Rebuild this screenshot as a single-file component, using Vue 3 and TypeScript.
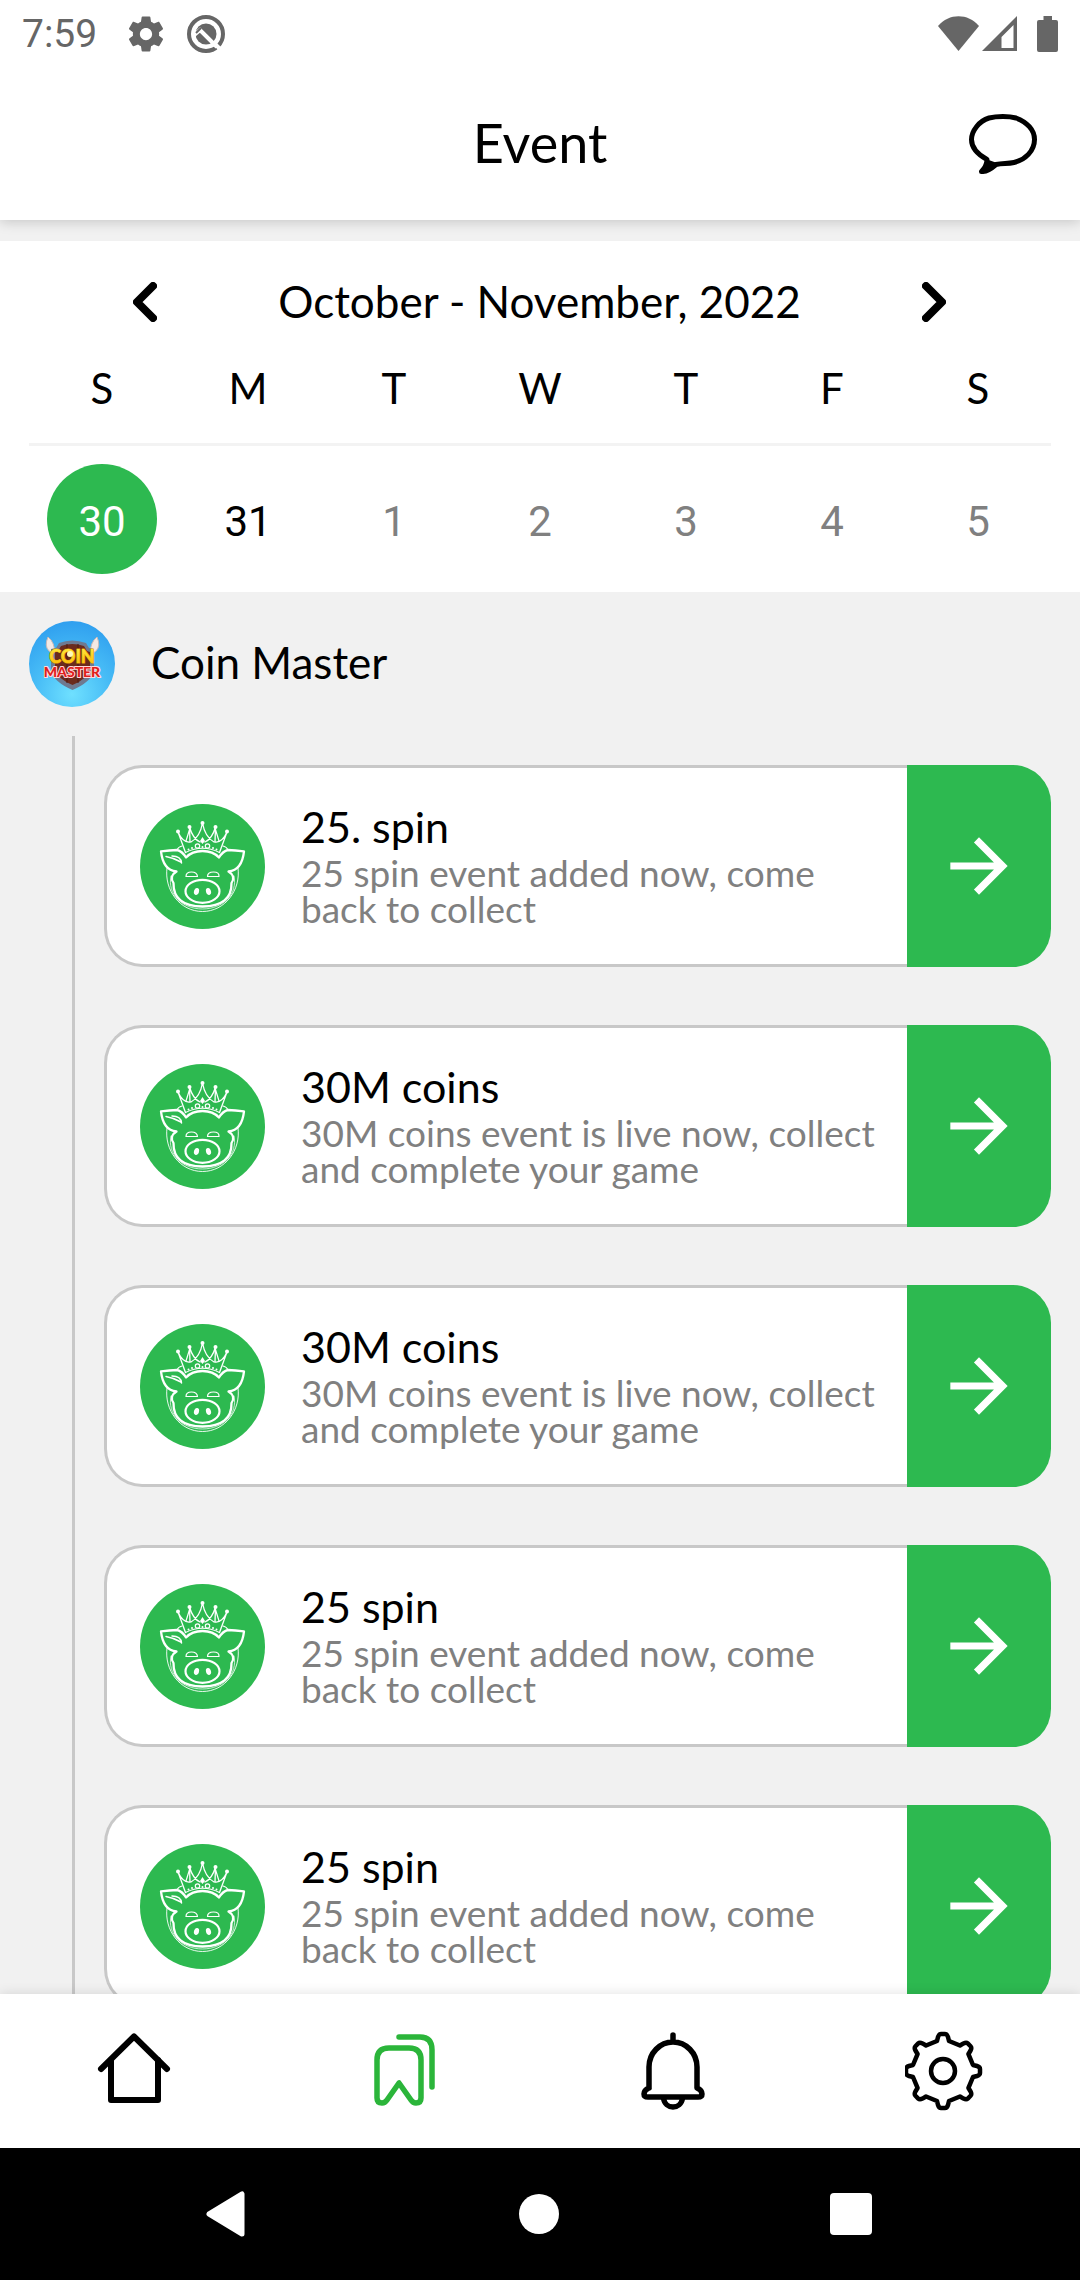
<script setup lang="ts">
interface EventItem {
  id: number
  title: string
  text: string
}

interface Day {
  date: number
  state: 'selected' | 'current' | 'next'
}

const weekdays: string[] = ['S', 'M', 'T', 'W', 'T', 'F', 'S']

const days: Day[] = [
  { date: 30, state: 'selected' },
  { date: 31, state: 'current' },
  { date: 1, state: 'next' },
  { date: 2, state: 'next' },
  { date: 3, state: 'next' },
  { date: 4, state: 'next' },
  { date: 5, state: 'next' },
]

const spin = '25 spin event added now, come back to collect'
const coins = '30M coins event is live now, collect and complete your game'

const events: EventItem[] = [
  { id: 1, title: '25. spin', text: spin },
  { id: 2, title: '30M coins', text: coins },
  { id: 3, title: '30M coins', text: coins },
  { id: 4, title: '25 spin', text: spin },
  { id: 5, title: '25 spin', text: spin },
]

// Outline of an eight-toothed cog centred on 0,0
function cogPath(): string {
  let d = ''
  for (let i = 0; i < 8; i++) {
    const a = (i * Math.PI) / 4
    const p = (x: number, y: number): string =>
      `${(x * Math.cos(a) - y * Math.sin(a)).toFixed(2)} ${(x * Math.sin(a) + y * Math.cos(a)).toFixed(2)}`
    d += `${i === 0 ? 'M' : 'L'}${p(-6, -30)}L${p(-5, -34)}Q${p(-4, -37)} ${p(-2, -37)}`
    d += `L${p(2, -37)}Q${p(4, -37)} ${p(5, -34)}L${p(6, -30)}`
  }
  return d + 'Z'
}
const cog = cogPath()
</script>

<template>
  <div class="app">
    <div class="status">
      <div class="status-side">
        <span class="clock">7:59</span>
        <svg class="status-cog" viewBox="0 0 24 24" aria-hidden="true">
          <path d="M19.43 12.98c.04-.32.07-.64.07-.98s-.03-.66-.07-.98l2.11-1.65c.19-.15.24-.42.12-.64l-2-3.46c-.12-.22-.39-.3-.61-.22l-2.49 1c-.52-.4-1.08-.73-1.69-.98l-.38-2.65C14.46 2.18 14.25 2 14 2h-4c-.25 0-.46.18-.49.42l-.38 2.65c-.61.25-1.17.59-1.69.98l-2.49-1c-.23-.09-.49 0-.61.22l-2 3.46c-.13.22-.07.49.12.64l2.11 1.65c-.04.32-.07.65-.07.98s.03.66.07.98l-2.11 1.65c-.19.15-.24.42-.12.64l2 3.46c.12.22.39.3.61.22l2.49-1c.52.4 1.08.73 1.69.98l.38 2.65c.03.24.24.42.49.42h4c.25 0 .46-.18.49-.42l.38-2.65c.61-.25 1.17-.59 1.69-.98l2.49 1c.23.09.49 0 .61-.22l2-3.46c.12-.22.07-.49-.12-.64l-2.11-1.65zM12 15.5c-1.93 0-3.5-1.57-3.5-3.5s1.57-3.5 3.5-3.5 3.5 1.57 3.5 3.5-1.57 3.5-3.5 3.5z" />
        </svg>
        <svg class="status-q" viewBox="0 0 38 38" aria-hidden="true">
          <circle cx="19" cy="19" r="17" fill="none" stroke="#666" stroke-width="4" />
          <circle cx="19" cy="19" r="10.5" />
          <path d="M6 21 13 15 30 32" fill="none" stroke="#fff" stroke-width="4" />
          <path d="M9 18 14 13" fill="none" stroke="#666" stroke-width="2" />
          <path d="M26 27 36 37" fill="none" stroke="#fff" stroke-width="4" />
        </svg>
      </div>
      <div class="status-side">
        <svg width="41" height="36" viewBox="0 0 41 36" aria-hidden="true">
          <path d="M0 10C11-3 30-3 41 10L20.500 35Z" />
        </svg>
        <svg class="signal" width="35" height="36" viewBox="0 0 35 36" aria-hidden="true">
          <path d="M35 0V35H0ZM31.500 9 19.500 21V32H31.500Z" fill-rule="evenodd" />
        </svg>
        <svg class="battery" width="21" height="36" viewBox="0 0 21 36" aria-hidden="true">
          <path d="M6.500 0H15V4H19Q21 4 21 6V34Q21 36 19 36H2Q0 36 0 34V6Q0 4 2 4H6.500Z" />
        </svg>
      </div>
    </div>

    <header class="header">
      <h1>Event</h1>
      <button class="chat" type="button" aria-label="Messages">
        <svg width="68" height="60" viewBox="0 0 68 60" aria-hidden="true">
          <path d="M18 45.500C8 40 2.500 34 2.500 25.500C2.500 17 10 7 20 4C28 2 40 2 47 4C58 8 65.500 16 65.500 25.500C65.500 37 56 46 45 48.500C38 50 34 49 27 50.500C23 54 18 58 12.500 57.500C16 54 18 51 18 45.500Z" fill="none" stroke="#000" stroke-width="5" stroke-linejoin="round" />
          <path d="M17 45 28 49 18 57 12 58Z" />
        </svg>
      </button>
    </header>

    <section class="calendar">
      <div class="month">
        <button type="button" aria-label="Previous week">
          <svg width="24" height="40" viewBox="0 0 24 40" aria-hidden="true"><path d="M20 4 4 20 20 36" /></svg>
        </button>
        <h2>October - November, 2022</h2>
        <button type="button" aria-label="Next week">
          <svg width="24" height="40" viewBox="0 0 24 40" aria-hidden="true"><path d="M4 4 20 20 4 36" /></svg>
        </button>
      </div>
      <div class="week weekdays">
        <span v-for="(name, i) in weekdays" :key="i">{{ name }}</span>
      </div>
      <div class="week dates">
        <button v-for="day in days" :key="day.date" type="button" :class="day.state">{{ day.date }}</button>
      </div>
    </section>

    <main class="feed">
      <div class="game">
        <svg class="game-logo" viewBox="0 0 86 86" role="img" aria-label="Coin Master logo">
          <defs>
            <radialGradient id="sky" cx="0.5" cy="0.85" r="0.85">
              <stop offset="0" stop-color="#6fe0ff" />
              <stop offset="0.5" stop-color="#48bdf6" />
              <stop offset="1" stop-color="#2f9fef" />
            </radialGradient>
            <linearGradient id="gold" x1="0" y1="0" x2="0" y2="1">
              <stop offset="0" stop-color="#fff04a" />
              <stop offset="1" stop-color="#fbb800" />
            </linearGradient>
          </defs>
          <circle cx="43" cy="43" r="43" fill="url(#sky)" />
          <path d="M19 16Q15 25 20 30L26 34Q26 21 19 16ZM68 16Q72 25 67 30L61 34Q61 21 68 16Z" fill="#f3e9e4" stroke="#c9b9b8" stroke-width="1" />
          <path d="M30 22Q43 17 57 22L60 27 65 28V50Q62 61 43.500 69Q25 61 22 50V28L27 27Z" fill="#6e7a91" />
          <path d="M32 25Q43 21 55 25L58 30 61 31V49Q58 58 43.500 64Q29 58 26 49V31L29 30Z" fill="#6b2b1d" />
          <path d="M38 23V62M49 23V62" stroke="#4b1b12" stroke-width="1" />
          <g text-anchor="middle" paint-order="stroke" stroke-linejoin="round">
            <text x="43" y="42" class="logo-text" font-size="18" fill="url(#gold)" stroke="#e8a000" stroke-width="1">COIN</text>
            <text x="43" y="56" class="logo-text" font-size="14" fill="#e0201b" stroke="#ffd9dc" stroke-width="2">MASTER</text>
          </g>
          <circle cx="41" cy="33" r="3" fill="#fff7b8" />
        </svg>
        <h3>Coin Master</h3>
      </div>

      <ul class="timeline">
        <li v-for="item in events" :key="item.id" class="card">
          <div class="card-body">
            <svg class="pig" viewBox="0 0 125 125" aria-hidden="true">
              <circle cx="62.500" cy="62.500" r="62.500" fill="#2db950" />
              <g fill="none" stroke="#fff" stroke-linecap="round" stroke-linejoin="round">
                <path d="M45.500 48.500 38 28Q43 39 50 38L49.500 23Q53 35 60 38M79.500 48.500 87 28Q82 39 75 38L75.500 23Q72 35 65 38M51 38Q60 33 62.500 19Q65 33 74 38" stroke-width="1.300" />
                <path d="M50 24 46 37M75 24 79 37M45.500 48.500Q62.500 40 79.500 48.500M37 46Q38 43 42 42M88 46Q87 43 83 42" stroke-width="1.200" />
                <circle cx="57.500" cy="42" r="2.200" stroke-width="1.200" />
                <circle cx="67.500" cy="42" r="2.200" stroke-width="1.200" />
                <path d="M46 53.500Q42 47 37 46Q30 46.500 21 47.300Q23 66 36.500 67.500Q29 72 33.500 79Q33 102 62.500 102.500Q92 102 91.500 79Q96 72 88.500 67.500Q102 66 104 47.300Q95 46.500 88 46Q83 47 79 53.500Q73 47 62.500 47Q52 47 46 53.500Z" stroke-width="2.300" />
                <path d="M27 64C24 86 40 107.500 62.500 107.500S101 86 98 64" stroke-width="0.900" />
                <path d="M31 72C27 90 42 105 62.500 105S98 90 94 72" stroke-width="0.700" />
                <path d="M46 72.500Q46 68 51.500 68T57.500 72.500ZM67.500 72.500Q67.500 68 73.500 68T79 72.500Z" stroke-width="1.200" />
                <ellipse cx="62.500" cy="87.300" rx="17" ry="11.500" stroke-width="2.200" />
                <path d="M26 52.500Q34 54 41 58" stroke-width="1.500" />
                <path d="M32 52Q41 52 41.500 59" stroke-width="1.500" />
              </g>
              <g fill="#fff">
                <circle cx="38" cy="27.500" r="2" />
                <circle cx="49.500" cy="23" r="2" />
                <circle cx="62.500" cy="19" r="2" />
                <circle cx="75.500" cy="23" r="2" />
                <circle cx="87" cy="27.500" r="2" />
                <path d="M62.500 33 65 37 62.500 40 60 37Z" />
                <circle cx="62.500" cy="43" r="1" />
                <circle cx="52" cy="44" r="1" />
                <circle cx="73" cy="44" r="1" />
                <circle cx="48.500" cy="45.500" r="1" />
                <circle cx="76.500" cy="45.500" r="1" />
                <ellipse cx="56.500" cy="87.500" rx="2.500" ry="3.500" transform="rotate(15 56.500 87.500)" />
                <ellipse cx="68.500" cy="87.500" rx="2.500" ry="3.500" transform="rotate(-15 68.500 87.500)" />
              </g>
            </svg>
            <div class="card-text">
              <h4>{{ item.title }}</h4>
              <p>{{ item.text }}</p>
            </div>
          </div>
          <button class="open" type="button" :aria-label="'Open ' + item.title">
            <svg width="86" height="86" viewBox="0 0 24 24" aria-hidden="true">
              <path d="M12 4l-1.410 1.410L16.170 11H4v2h12.170l-5.580 5.590L12 20l8-8z" fill="#fff" />
            </svg>
          </button>
        </li>
      </ul>
    </main>

    <nav class="tabs">
      <a href="#home" aria-label="Home">
        <svg viewBox="0 0 80 80" aria-hidden="true">
          <g class="line" stroke-width="6">
            <path d="M6 38 39 5.500 72 38" />
            <path d="M16 29V69H63V29" />
          </g>
        </svg>
      </a>
      <a href="#events" class="active" aria-label="Events" aria-current="page">
        <svg viewBox="0 0 80 80" aria-hidden="true">
          <g class="line" stroke-width="5.500">
            <path d="M12 29Q12 17 24 17H44Q56 17 56 29V67Q56 72 51 72Q48 72 46 69L34 52 22 69Q20 72 17 72Q12 72 12 67Z" />
            <path d="M34 6H55Q67 6 67 19V56" />
          </g>
        </svg>
      </a>
      <a href="#alerts" aria-label="Notifications">
        <svg viewBox="0 0 80 80" aria-hidden="true">
          <g class="line" stroke-width="5.500">
            <path d="M38 4V10M14 57V36C14 22 25 11 38 11S62 22 62 36V57Q67 59 67 63Q67 66 63 66H13Q9 66 9 63Q9 59 14 57" />
            <path d="M28.500 67C30 79 46 79 47.500 67" />
          </g>
        </svg>
      </a>
      <a href="#settings" aria-label="Settings">
        <svg viewBox="-38 -40 80 80" aria-hidden="true">
          <g class="line" stroke-width="4.500">
            <path :d="cog" />
            <circle r="12" />
          </g>
        </svg>
      </a>
    </nav>

    <div class="system">
      <button type="button" aria-label="Back">
        <svg width="40" height="46" viewBox="0 0 40 46" aria-hidden="true">
          <path d="M3 23 36 3V43Z" fill="#fff" stroke="#fff" stroke-width="5" stroke-linejoin="round" />
        </svg>
      </button>
      <button type="button" aria-label="Home screen"><span class="dot"></span></button>
      <button type="button" aria-label="Recent apps"><span class="square"></span></button>
    </div>
  </div>
</template>

<style>
body {
  margin: 0;
}
</style>

<style scoped>
.app {
  display: flex;
  flex-direction: column;
  height: 100vh;
  overflow: hidden;
  background: #f1f1f1;
  color: #000;
  font-family: Lato, "Liberation Sans", sans-serif;
}
h1, h2, h3, h4, p, ul {
  margin: 0;
  padding: 0;
  font-weight: 400;
}
button {
  display: flex;
  align-items: center;
  justify-content: center;
  padding: 0;
  border: 0;
  background: none;
  color: inherit;
  font: inherit;
}
svg {
  display: block;
  flex: none;
}
.status {
  position: relative;
  display: flex;
  justify-content: space-between;
  align-items: center;
  flex: none;
  height: 68px;
  padding: 0 22px;
  background: #fff;
  fill: #666;
}
.status-side {
  display: flex;
  align-items: center;
}
.clock {
  color: #666;
  font-family: Roboto, sans-serif;
  font-size: 39px;
}
.status-cog {
  width: 42px;
  height: 42px;
  margin-left: 28px;
}
.status-q {
  width: 38px;
  height: 38px;
  margin-left: 20px;
}
.signal {
  margin-left: 3px;
}
.battery {
  margin-left: 20px;
}
.header {
  display: grid;
  grid-template-columns: 1fr auto 1fr;
  align-items: center;
  flex: none;
  height: 152px;
  padding: 0 43px;
  background: #fff;
  box-shadow: 0 2px 12px rgba(0, 0, 0, 0.18);
}
.header h1 {
  grid-column: 2;
  padding-bottom: 4px;
  font-size: 54px;
}
.chat {
  justify-self: end;
}
.calendar {
  flex: none;
  margin-top: 21px;
  padding: 20px 29px 0;
  background: #fff;
}
.month {
  display: flex;
  align-items: center;
  justify-content: space-between;
  height: 82px;
  padding: 0 87px 0 86px;
}
.month h2 {
  padding-bottom: 2px;
  font-size: 44px;
}
.month button {
  width: 60px;
  height: 60px;
}
.month path {
  fill: none;
  stroke: #000;
  stroke-width: 8;
  stroke-linecap: round;
  stroke-linejoin: round;
}
.week {
  display: grid;
  grid-template-columns: repeat(7, 1fr);
  place-items: center;
}
.weekdays {
  height: 90px;
  padding-bottom: 10px;
  border-bottom: 3px solid #f3f3f3;
  font-size: 42px;
}
.dates {
  height: 146px;
  font-family: Roboto, sans-serif;
  font-size: 42px;
}
.dates button {
  box-sizing: border-box;
  width: 110px;
  height: 110px;
  padding-top: 4px;
  border-radius: 50%;
}
.dates .selected {
  background: #2db950;
  color: #fff;
}
.dates .next {
  color: #808080;
}
.feed {
  flex: 1;
  min-height: 0;
  overflow: hidden;
}
.game {
  display: flex;
  align-items: center;
  gap: 36px;
  height: 144px;
  padding-left: 29px;
}
.game h3 {
  padding-bottom: 4px;
  font-size: 44px;
}
.game-logo {
  width: 86px;
  height: 86px;
}
.logo-text {
  font-family: Lato, sans-serif;
  font-weight: 900;
}
.timeline {
  display: flex;
  flex-direction: column;
  gap: 58px;
  margin-left: 72px;
  padding: 29px;
  border-left: 3px solid #c8c8c8;
  list-style: none;
}
.card {
  display: flex;
  min-height: 202px;
}
.card-body {
  display: flex;
  align-items: center;
  flex: 1;
  gap: 36px;
  min-width: 0;
  padding: 0 24px 0 33px;
  border: 3px solid #c8c8c8;
  border-right: 0;
  border-radius: 38px 0 0 38px;
  background: #fff;
}
.pig {
  width: 125px;
  height: 125px;
}
.card-text {
  padding-bottom: 2px;
}
.card-text h4 {
  margin-bottom: 4px;
  font-size: 43px;
  line-height: 48px;
}
.card-text p {
  color: #808080;
  font-size: 37px;
  line-height: 36px;
}
.open {
  flex: none;
  width: 144px;
  border-radius: 0 38px 38px 0;
  background: #2db950;
}
.tabs {
  display: grid;
  grid-template-columns: repeat(4, 1fr);
  place-items: center;
  flex: none;
  height: 154px;
  background: #fff;
  box-shadow: 0 0 12px rgba(0, 0, 0, 0.12);
  color: #000;
}
.tabs a {
  color: inherit;
}
.tabs .active {
  color: #2bb53a;
}
.tabs svg {
  width: 80px;
  height: 80px;
}
.line {
  fill: none;
  stroke: currentColor;
  stroke-linecap: round;
  stroke-linejoin: round;
}
.system {
  display: flex;
  align-items: center;
  justify-content: space-between;
  flex: none;
  height: 132px;
  padding: 0 208px 0 205px;
  background: #000;
}
.system button {
  width: 42px;
}
.dot {
  width: 40px;
  height: 40px;
  border-radius: 50%;
  background: #fff;
}
.square {
  width: 42px;
  height: 42px;
  border-radius: 4px;
  background: #fff;
}
</style>
